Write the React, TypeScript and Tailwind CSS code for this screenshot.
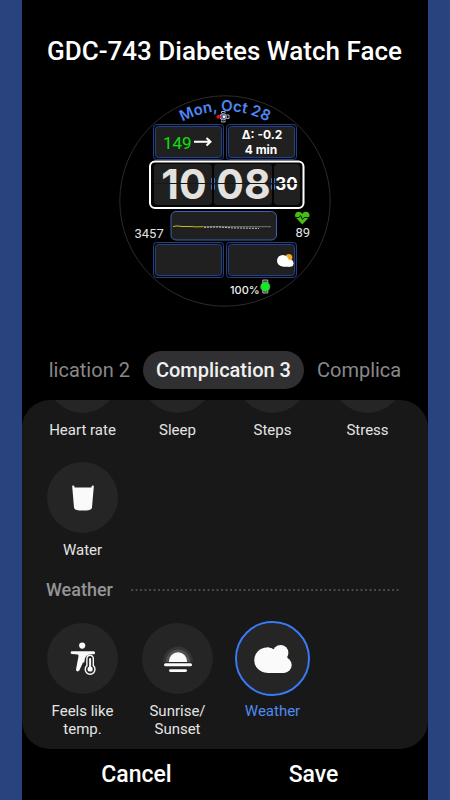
import type { ReactNode } from "react";
import clsx from "clsx";

type OptionProps = {
  label: string;
  icon?: ReactNode;
  selected?: boolean;
};

function Option({ label, icon, selected = false }: OptionProps) {
  return (
    <button type="button" aria-pressed={selected} className="flex flex-col items-center gap-2">
      <span
        className={clsx(
          "flex size-[71px] items-center justify-center rounded-full bg-[#252525]",
          selected && "outline-2 outline-[#3a7bf5]",
        )}
      >
        {icon}
      </span>
      <span
        className={clsx(
          "w-[76px] text-center text-[15px] leading-[18px]",
          selected ? "text-[#5288f2]" : "text-[#e4e4e4]",
        )}
      >
        {label}
      </span>
    </button>
  );
}

function WaterIcon() {
  return (
    <svg viewBox="0 0 24 26" className="h-[26px] w-6" aria-hidden="true">
      <path
        d="M1.2 1.6C1.1 0 3.2 0 3.4 1.6L3.6 2.6H20.4L20.6 1.6C20.8 0 22.9 0 22.8 1.6L21 22.6C20.8 24.6 18 25.6 12 25.6S3.2 24.6 3 22.6Z"
        fill="#fafafa"
      />
    </svg>
  );
}

function FeelsLikeIcon() {
  return (
    <svg viewBox="0 0 26 34" className="h-[34px] w-[26px]" aria-hidden="true">
      <circle cx="12.2" cy="3.6" r="3.1" fill="#fafafa" />
      <path
        d="M2 9.300H23.600A1.400 1.400 0 0 1 23.600 12.300H20.500C16.800 12.600 14.800 14.800 14.600 18.500L14.200 20.500H13L9.300 28.600C8.500 30 5.800 29.600 6 27.600L8.600 13.800 7.800 12.500 2 12A1.350 1.350 0 0 1 2 9.300Z"
        fill="#fafafa"
      />
      <path
        d="M16.900 16.500A3.200 3.200 0 0 1 23.300 16.500V23.600A4.900 4.900 0 1 1 16.900 23.600Z"
        fill="#252525"
        stroke="#fafafa"
        strokeWidth="1.4"
      />
      <path d="M20.100 17V25.500" stroke="#fafafa" strokeWidth="2" strokeLinecap="round" />
      <circle cx="20.1" cy="27" r="2.6" fill="#fafafa" />
    </svg>
  );
}

function SunriseIcon() {
  return (
    <svg viewBox="0 0 30 28" className="h-7 w-[30px]" aria-hidden="true">
      <path d="M0 17A15 15.5 0 0 1 30 17Z" fill="#343434" />
      <path d="M2.8 17A12.2 12.4 0 0 1 27.2 17Z" fill="#505050" />
      <path d="M5.8 17A9.2 9.8 0 0 1 24.2 17Z" fill="#fafafa" />
      <rect y="17" width="30" height="6" fill="#252525" />
      <rect x="1" y="18.3" width="28" height="3" rx="1.5" fill="#fafafa" />
      <rect x="6" y="24.2" width="18" height="2.8" rx="1.4" fill="#fafafa" />
    </svg>
  );
}

function CloudIcon() {
  return (
    <svg viewBox="0 0 38 28" className="h-7 w-[38px]" fill="#fafafa" aria-hidden="true">
      <circle cx="12.9" cy="15.2" r="12.6" />
      <circle cx="26.6" cy="7.8" r="7.8" />
      <circle cx="29.8" cy="20" r="7.9" />
      <path d="M13 2.600C15.500 2.600 17.500 3.200 19.600 4.400L28 8 33.500 12.500 30 27.900H13Z" />
    </svg>
  );
}

type DataBoxProps = { x: number; y: number };

function DataBox({ x, y }: DataBoxProps) {
  return (
    <g stroke="#263f80">
      <rect x={x + 0.5} y={y + 0.5} width="70" height="35" rx="3" fill="#05080f" />
      <rect x={x + 2.5} y={y + 2.5} width="66" height="31" rx="3" fill="#202020" />
    </g>
  );
}

function WatchFace() {
  return (
    <svg
      viewBox="119 95 212 212"
      className="size-[212px]"
      role="img"
      aria-label="Watch face preview"
      fontFamily="Inter, sans-serif"
    >
      <defs>
        <path id="date-arc" d="M135 201A90 90 0 0 1 315 201" />
      </defs>
      <circle cx="225" cy="201" r="105.2" fill="#000" stroke="#2c2c2c" />
      <text fontSize="15" fontWeight="600" fill="#5085f5" textAnchor="middle">
        <textPath href="#date-arc" startOffset="50%">
          Mon, Oct 28
        </textPath>
      </text>

      {/* tiny watch marker under the date */}
      <g fill="none" stroke="#b5b0aa">
        <circle cx="223.300" cy="116.800" r="3.200" fill="#3b5fb5" />
        <path d="M221.500 113v-1.500h3.600V113M221.500 120.500v1.500h3.600v-1.500M226.500 115h2.500v3.500h-2.500" />
      </g>
      <path d="M216.500 116.800h5M218.500 114.800v4" stroke="#e01515" strokeWidth="2" />
      <circle cx="224" cy="116.800" r="1.300" fill="#fff" />

      <DataBox x={153} y={124} />
      <DataBox x={226} y={124} />
      <DataBox x={153} y={242} />
      <DataBox x={226} y={242} />

      <text x="163" y="149" fontFamily="Roboto, sans-serif" fontSize="17" fill="#0be00b">
        149
      </text>
      <path
        d="M194 141.700H210M206.500 137.900L210.500 141.700 206.500 145.500"
        fill="none"
        stroke="#fff"
        strokeWidth="2"
      />
      <g fontSize="12" fontWeight="700" fill="#fff" textAnchor="middle">
        <text x="262" y="139">Δ: -0.2</text>
        <text x="261" y="154">4 min</text>
      </g>

      {/* flip clock */}
      <rect x="150" y="161.500" width="153.500" height="46.500" rx="5" fill="#050505" stroke="#fff" strokeWidth="2" />
      <g fill="#202020">
        <rect x="154" y="164" width="58" height="41" rx="4" />
        <rect x="214" y="164" width="58" height="41" rx="3" />
        <rect x="274" y="164" width="26" height="41" rx="4" />
      </g>
      <g fontWeight="700" fill="#e4e2de" textAnchor="middle">
        <text x="184" y="199" fontSize="41">10</text>
        <text x="243.500" y="199" fontSize="41">08</text>
        <text x="286.500" y="190" fontSize="17" fill="#fff">30</text>
      </g>
      <path d="M154 183.500H300" stroke="#181818" />
      <path
        d="M211.500 178V189.500M214.500 178V189.500M271.500 178V189.500M274.500 178V189.500"
        stroke="#3d6cc8"
        strokeDasharray="5 1.500"
      />

      {/* glucose graph */}
      <rect x="171" y="211.500" width="105.500" height="28.500" rx="5" fill="#202020" stroke="#3960b8" />
      <path d="M173 226.500l4-.6 5 .6h8l6 .4 7-.2" fill="none" stroke="#c3bd22" />
      <path d="M203 226.700H271" stroke="#77776f" />
      <path d="M204 227.300l14-.4 14 1 27 .5" fill="none" stroke="#c4c4bc" strokeDasharray="2 1" />

      <g fontFamily="Roboto, sans-serif" fontSize="13" fill="#e2e2e2">
        <text x="134.500" y="237.500">3457</text>
        <text x="295.500" y="237">89</text>
      </g>
      <path
        d="M302.300 224.500L296.200 218C293.800 215.400 295.500 211.800 298.600 211.800 300.300 211.800 301.600 212.600 302.300 213.900 303 212.600 304.300 211.800 306 211.800 309.100 211.800 310.800 215.400 308.400 218Z"
        fill="#45bd16"
      />
      <path d="M294.500 217.500h4.500l1.500-2 2 4 1.500-2h6" fill="none" stroke="#061806" />

      <circle cx="288.800" cy="257.500" r="3.500" fill="#f5a623" />
      <g fill="#fff">
        <circle cx="282.800" cy="260.700" r="5.800" />
        <circle cx="290" cy="263.200" r="3.500" />
        <path d="M283 258H288L290 266.700H283Z" />
      </g>

      <text x="230" y="294" fontSize="11" fontWeight="500" fill="#f0f0f0">100%</text>
      <path d="M262.800 280h5v13h-5Z" fill="#333" stroke="#aaa" />
      <circle cx="265.300" cy="286.700" r="4.600" fill="#08f01c" stroke="#829882" strokeWidth=".7" />
    </svg>
  );
}

export default function App() {
  return (
    <div className="min-h-screen bg-[#29437f] px-[22px] font-['Roboto',sans-serif]">
      <main className="flex min-h-screen flex-col bg-black">
        <h1 className="px-[25px] pt-[35px] text-[26px] leading-8 font-medium whitespace-nowrap text-white">
          GDC-743 Diabetes Watch Face
        </h1>

        <div className="mt-7 flex justify-center">
          <WatchFace />
        </div>

        <div
          role="tablist"
          aria-label="Complications"
          className="mt-11 flex items-center justify-center gap-[13px] text-xl whitespace-nowrap text-[#88888b]"
        >
          <button type="button" role="tab" aria-selected="false">
            lication 2
          </button>
          <button
            type="button"
            role="tab"
            aria-selected="true"
            className="h-[38px] rounded-full bg-[#303032] px-[13px] font-medium text-[#f0f0f0]"
          >
            Complication 3
          </button>
          <button type="button" role="tab" aria-selected="false">
            Complica
          </button>
        </div>

        <section className="mt-[11px] overflow-hidden rounded-[28px] bg-[#181818] px-[13px] pb-[11px]">
          <div className="-mt-[58px] grid grid-cols-4 gap-y-[23px]">
            <Option label="Heart rate" />
            <Option label="Sleep" />
            <Option label="Steps" />
            <Option label="Stress" />
            <Option label="Water" icon={<WaterIcon />} />
          </div>

          <div className="mt-[19px] flex items-center gap-[18px] pr-[15px] pl-[11px]">
            <h2 className="text-lg leading-6 font-medium text-[#949497]">Weather</h2>
            <svg className="h-[2px] min-w-0 flex-1" aria-hidden="true">
              <line
                x1="1"
                y1="1"
                x2="100%"
                y2="1"
                stroke="#555"
                strokeWidth="2"
                strokeLinecap="round"
                strokeDasharray="0.1 4.4"
              />
            </svg>
          </div>

          <div className="mt-[21px] grid grid-cols-4 items-start">
            <Option label="Feels like temp." icon={<FeelsLikeIcon />} />
            <Option label="Sunrise/ Sunset" icon={<SunriseIcon />} />
            <Option label="Weather" icon={<CloudIcon />} selected />
          </div>
        </section>

        <footer className="grid grid-cols-2 px-[26px] pt-[10px] text-[23px] leading-8 font-medium text-white">
          <button type="button">Cancel</button>
          <button type="button">Save</button>
        </footer>
      </main>
    </div>
  );
}
